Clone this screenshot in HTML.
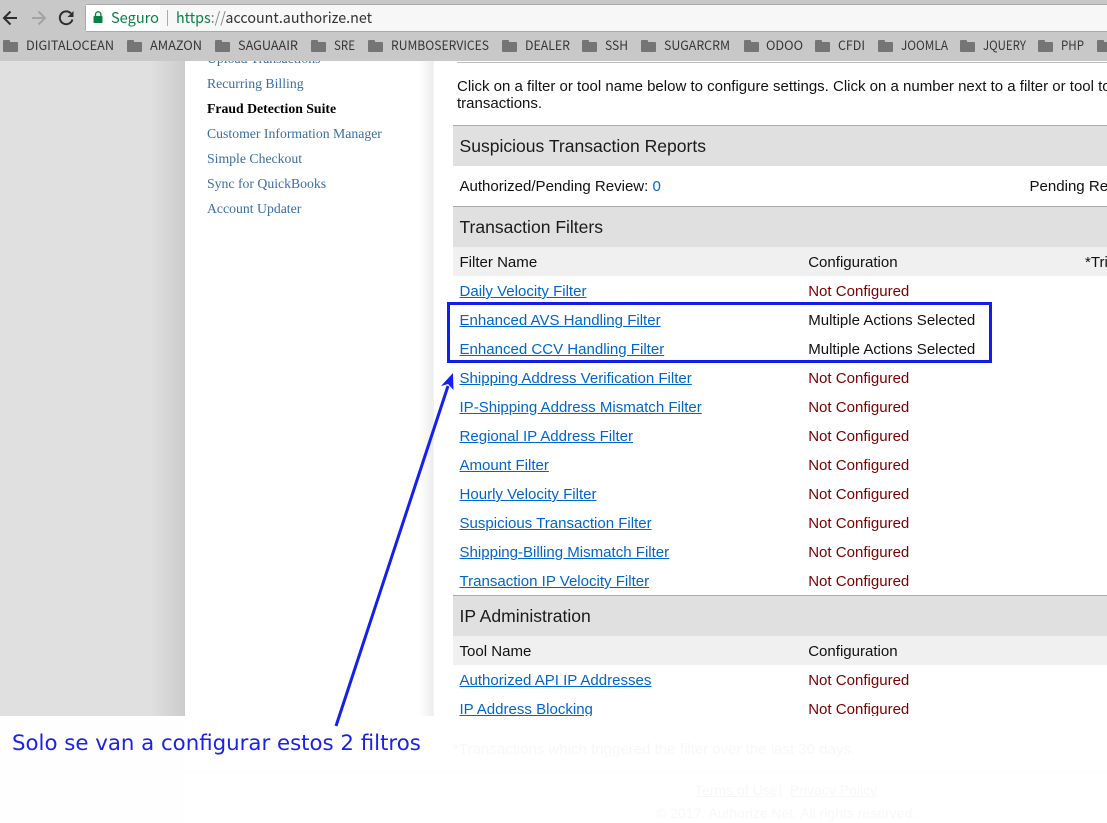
<!DOCTYPE html>
<html><head><meta charset="utf-8"><style>
html,body{margin:0;padding:0;background:#fff}
body{position:relative;width:1107px;height:823px;overflow:hidden;font-family:"Liberation Sans",sans-serif}
.a{position:absolute;white-space:nowrap}
.t{font-size:15.04px;line-height:20px;color:#111}
.c{left:459.5px}
.d{left:808.2px}
.l{color:#0066cc;text-decoration:underline}
.r{color:#7a0000}
.h{font-size:17.55px;line-height:22px;color:#1a1a1a;left:459.5px}
.s{font-family:"Liberation Serif",serif;font-size:13.76px;line-height:18px;color:#3a6ea5;left:207px}
.g{position:absolute;left:453px;width:654px;background:#e0e0e0}
.f{position:absolute;top:42px;width:15px;height:10px;background:#757575;border-radius:1px}
.f:before{content:"";position:absolute;left:0;top:-2px;width:7px;height:3px;background:#757575;border-radius:1px 1px 0 0}
.b{font-family:"Noto Sans CJK JP",sans-serif;font-size:13px;fill:#363636}
.u{font-family:"Noto Sans CJK JP",sans-serif;font-size:15px}
</style></head><body>
<div class="a" style="left:0;top:61px;width:185px;height:655px;background:linear-gradient(90deg,#e0e0e0 0,#e0e0e0 150px,#ccc 185px)"></div>
<div class="a" style="left:405px;top:61px;width:48px;height:655px;background:linear-gradient(90deg,#fff 0,#fff 14px,#ededed 28px,#f3f3f3 28px,#f3f3f3 29px,#fff 29px)"></div>

<div class="a s" style="top:50px">Upload Transactions</div>
<div class="a s" style="top:75px">Recurring Billing</div>
<div class="a s" style="top:100px;color:#000;font-weight:bold">Fraud Detection Suite</div>
<div class="a s" style="top:125px">Customer Information Manager</div>
<div class="a s" style="top:150px">Simple Checkout</div>
<div class="a s" style="top:175px">Sync for QuickBooks</div>
<div class="a s" style="top:200px">Account Updater</div>

<div class="a" style="left:457px;top:62px;width:650px;height:1px;background:#bbb"></div>
<div class="a t" style="left:457px;top:77px;font-size:15px">Click on a filter or tool name below to configure settings. Click on a number next to a filter or tool to view</div>
<div class="a t" style="left:457px;top:94px;font-size:15px">transactions.</div>

<div class="g" style="top:125px;height:41px;border-top:1px solid #aaa;box-sizing:border-box"></div>
<div class="a h" style="top:135px">Suspicious Transaction Reports</div>
<div class="a t c" style="top:177px">Authorized/Pending Review: <span style="color:#0066cc">0</span></div>
<div class="a t" style="left:1029.5px;top:177px">Pending Review</div>

<div class="g" style="top:206px;height:41px;border-top:1px solid #aaa;box-sizing:border-box"></div>
<div class="a h" style="top:216px">Transaction Filters</div>
<div class="g" style="top:247px;height:29px;background:#f0f0f0"></div>
<div class="a t c" style="top:253px">Filter Name</div>
<div class="a t d" style="top:253px">Configuration</div>
<div class="a t" style="left:1085px;top:253px">*Triggered</div>

<div class="a t l c" style="top:282px">Daily Velocity Filter</div><div class="a t r d" style="top:282px">Not Configured</div>
<div class="a t l c" style="top:311px">Enhanced AVS Handling Filter</div><div class="a t d" style="top:311px">Multiple Actions Selected</div>
<div class="a t l c" style="top:340px">Enhanced CCV Handling Filter</div><div class="a t d" style="top:340px">Multiple Actions Selected</div>
<div class="a t l c" style="top:369px">Shipping Address Verification Filter</div><div class="a t r d" style="top:369px">Not Configured</div>
<div class="a t l c" style="top:398px">IP-Shipping Address Mismatch Filter</div><div class="a t r d" style="top:398px">Not Configured</div>
<div class="a t l c" style="top:427px">Regional IP Address Filter</div><div class="a t r d" style="top:427px">Not Configured</div>
<div class="a t l c" style="top:456px">Amount Filter</div><div class="a t r d" style="top:456px">Not Configured</div>
<div class="a t l c" style="top:485px">Hourly Velocity Filter</div><div class="a t r d" style="top:485px">Not Configured</div>
<div class="a t l c" style="top:514px">Suspicious Transaction Filter</div><div class="a t r d" style="top:514px">Not Configured</div>
<div class="a t l c" style="top:543px">Shipping-Billing Mismatch Filter</div><div class="a t r d" style="top:543px">Not Configured</div>
<div class="a t l c" style="top:572px">Transaction IP Velocity Filter</div><div class="a t r d" style="top:572px">Not Configured</div>

<div class="g" style="top:595px;height:41px;border-top:1px solid #aaa;box-sizing:border-box"></div>
<div class="a h" style="top:605px">IP Administration</div>
<div class="g" style="top:636px;height:29px;background:#f0f0f0"></div>
<div class="a t c" style="top:642px">Tool Name</div>
<div class="a t d" style="top:642px">Configuration</div>
<div class="a t l c" style="top:671px">Authorized API IP Addresses</div><div class="a t r d" style="top:671px">Not Configured</div>
<div class="a t l c" style="top:700px">IP Address Blocking</div><div class="a t r d" style="top:700px">Not Configured</div>

<!-- faded bottom overlay -->
<div class="a" style="left:0;top:716px;width:1107px;height:107px;background:#fff"></div>
<div class="a" style="left:0;top:716px;width:185px;height:107px;background:#fefefe"></div>
<div class="a" style="left:185px;top:772px;width:922px;height:1px;background:#fcfcfc"></div>
<div class="a t" style="left:453px;top:740px;color:#f7f7f7">*Transactions which triggered the filter over the last 30 days.</div>
<div class="a" style="left:695px;top:781px;font-size:14px;line-height:18px;color:#f7f7f7;text-decoration:underline">Terms of Use</div>
<div class="a" style="left:779px;top:781px;font-size:14px;line-height:18px;color:#f7f7f7">|</div>
<div class="a" style="left:790px;top:781px;font-size:14px;line-height:18px;color:#f7f7f7;text-decoration:underline">Privacy Policy</div>
<div class="a" style="left:656px;top:804px;font-size:14px;line-height:18px;color:#f7f7f7">© 2017. Authorize.Net. All rights reserved.</div>

<!-- annotations -->
<div class="a" style="left:447px;top:302px;width:545px;height:61px;box-sizing:border-box;border:3px solid #0f1ee8"></div>
<svg class="a" style="left:0;top:0" width="1107" height="823"><path d="M336 726L448 386" stroke="#1420f0" stroke-width="3" fill="none"/><path d="M453 373L453.5 390L448 384L441 386Z" fill="#1420f0"/></svg>
<div class="a" style="left:12px;top:731px;font-family:'DejaVu Sans',sans-serif;font-size:21.3px;line-height:26px;color:#1a22e8">Solo se van a configurar estos 2 filtros</div>

<!-- browser chrome -->
<div class="a" style="left:0;top:0;width:1107px;height:61px;background:#c8c8c8"></div>
<div class="a" style="left:85px;top:4px;width:1022px;height:28px;box-sizing:border-box;background:#f7f7f7;border:1px solid #a9a9a9;border-right:0;border-radius:3px 0 0 3px"></div>
<div class="a" style="left:86px;top:5px;width:74px;height:26px;background:#fff"></div>
<svg class="a" style="left:0;top:0" width="1107" height="61">
<path d="M17 18H4.5M10.5 11.5L4 18L10.5 24.5" stroke="#2e2e2e" stroke-width="2" fill="none"/>
<path d="M32 18H44.5M38.5 11.5L45 18L38.5 24.5" stroke="#a3a3a3" stroke-width="2" fill="none"/>
<path d="M71 13.5A6.4 6.4 0 1 0 72.4 19.5" stroke="#2e2e2e" stroke-width="2" fill="none"/><path d="M73.5 11V17H67.5Z" fill="#2e2e2e"/>
<path d="M95.5 16V14.5A2.7 2.7 0 0 1 100.9 14.5V16" stroke="#0b8043" stroke-width="1.4" fill="none"/><rect x="93.5" y="16" width="9" height="7" rx="0.8" fill="#0b8043"/>
<rect x="167" y="10" width="1" height="16" fill="#aaa"/>
<text class="u" x="111" y="23" fill="#0b8043" textLength="48" lengthAdjust="spacingAndGlyphs">Seguro</text>
<text class="u" x="176" y="23" fill="#333" textLength="196" lengthAdjust="spacingAndGlyphs"><tspan fill="#0b8043">https</tspan><tspan fill="#888">://</tspan>account.authorize.net</text>
<text class="b" x="26" y="50" textLength="88" lengthAdjust="spacingAndGlyphs">DIGITALOCEAN</text>
<text class="b" x="150" y="50" textLength="52" lengthAdjust="spacingAndGlyphs">AMAZON</text>
<text class="b" x="238" y="50" textLength="60" lengthAdjust="spacingAndGlyphs">SAGUAAIR</text>
<text class="b" x="334" y="50" textLength="21" lengthAdjust="spacingAndGlyphs">SRE</text>
<text class="b" x="391" y="50" textLength="98" lengthAdjust="spacingAndGlyphs">RUMBOSERVICES</text>
<text class="b" x="525" y="50" textLength="45" lengthAdjust="spacingAndGlyphs">DEALER</text>
<text class="b" x="605" y="50" textLength="23" lengthAdjust="spacingAndGlyphs">SSH</text>
<text class="b" x="664" y="50" textLength="66" lengthAdjust="spacingAndGlyphs">SUGARCRM</text>
<text class="b" x="766" y="50" textLength="37" lengthAdjust="spacingAndGlyphs">ODOO</text>
<text class="b" x="838" y="50" textLength="27" lengthAdjust="spacingAndGlyphs">CFDI</text>
<text class="b" x="901" y="50" textLength="47" lengthAdjust="spacingAndGlyphs">JOOMLA</text>
<text class="b" x="983" y="50" textLength="43" lengthAdjust="spacingAndGlyphs">JQUERY</text>
<text class="b" x="1061" y="50" textLength="23" lengthAdjust="spacingAndGlyphs">PHP</text>
</svg>

<div class="f" style="left:3px"></div>
<div class="f" style="left:127px"></div>
<div class="f" style="left:215px"></div>
<div class="f" style="left:311px"></div>
<div class="f" style="left:368px"></div>
<div class="f" style="left:502px"></div>
<div class="f" style="left:582px"></div>
<div class="f" style="left:641px"></div>
<div class="f" style="left:744px"></div>
<div class="f" style="left:815px"></div>
<div class="f" style="left:878px"></div>
<div class="f" style="left:960px"></div>
<div class="f" style="left:1038px"></div>
<div class="f" style="left:1097px"></div>
</body></html>
